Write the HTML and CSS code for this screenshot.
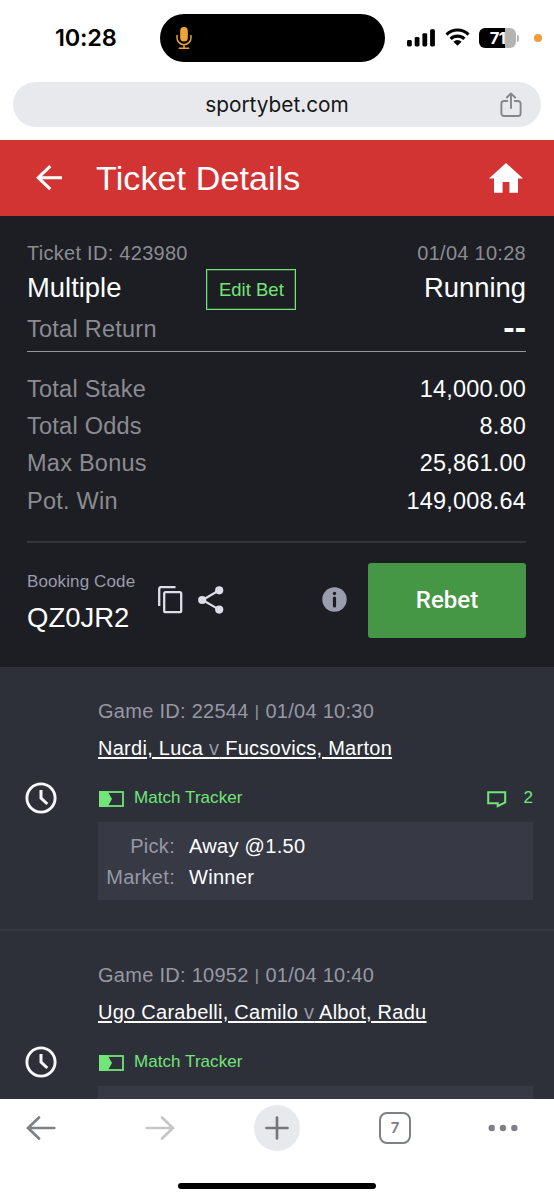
FILE: index.html
```html
<!DOCTYPE html>
<html lang="en">
<head>
<meta charset="utf-8">
<title>Ticket Details</title>
<link rel="stylesheet" href="styles.css">
</head>
<body>
<div class="phone">
  <div class="status">
    <div class="time">10:28</div>
    <div class="island">
      <svg width="16" height="23" viewBox="0 0 16 23"><rect x="4.2" y="0" width="7.6" height="14.6" rx="3.8" fill="#f0a335"/><path d="M1 8.5v2.2a7 7 0 0 0 14 0V8.500M8 17.700v3.500M3.300 21.300h9.400" fill="none" stroke="#e8a040" stroke-width="1.500" stroke-linecap="round"/></svg>
    </div>
    <svg class="signal" width="28" height="18" viewBox="0 0 28 18"><rect x="0" y="11" width="4.800" height="6.500" rx="1.400"/><rect x="7.700" y="8" width="4.800" height="9.500" rx="1.400"/><rect x="15.400" y="4.200" width="4.800" height="13.300" rx="1.400"/><rect x="23.100" y="0.300" width="4.800" height="17.200" rx="1.400"/></svg>
    <svg class="wifi" width="25" height="18" viewBox="0 0 25 18"><path d="M1.500 6.600a15.600 15.600 0 0 1 22 0M5.600 10.900a9.900 9.900 0 0 1 13.800 0" fill="none" stroke="#000" stroke-width="3.100"/><path d="M12.500 17.700 8.400 13.700a6 6 0 0 1 8.200 0z"/></svg>
    <div class="battery"><span>71</span></div>
    <i class="cap"></i>
    <i class="dot"></i>
  </div>
  <div class="address">
    <span>sportybet.com</span>
    <svg width="22" height="26" viewBox="0 0 22 26" fill="none" stroke="#85868b" stroke-width="1.900" stroke-linecap="round" stroke-linejoin="round"><path d="M7.300 9H4A2.600 2.600 0 0 0 1.400 11.600v9.800A2.600 2.600 0 0 0 4 24h14a2.600 2.600 0 0 0 2.600-2.600v-9.800A2.600 2.600 0 0 0 18 9h-3.300M11 16V1.800M6.900 5.500 11 1.400l4.100 4.100"/></svg>
  </div>
  <header class="header">
    <svg width="26" height="26" viewBox="0 0 26 26" fill="none" stroke="#fff" stroke-width="3.100"><path d="M14.300 1.200 2.200 12.700l12.100 11.500M2.500 12.700H26"/></svg>
    <h1>Ticket Details</h1>
    <svg class="home" width="34" height="30" viewBox="0 0 34 30" fill="#fff"><path d="M17 0 34 15.500h-5V29.700h-8.600V19h-6.800v10.700H5V15.500H0z"/></svg>
  </header>
  <main class="page">
    <section class="ticket">
      <div class="row id"><span>Ticket ID: 423980</span><span>01/04 10:28</span></div>
      <div class="row kind"><span>Multiple</span><button class="edit">Edit Bet</button><span class="running">Running</span></div>
      <div class="row return"><span>Total Return</span><b>--</b></div>
      <div class="stats">
        <div class="row"><span>Total Stake</span><em>14,000.00</em></div>
        <div class="row"><span>Total Odds</span><em>8.80</em></div>
        <div class="row"><span>Max Bonus</span><em>25,861.00</em></div>
        <div class="row"><span>Pot. Win</span><em>149,008.64</em></div>
      </div>
      <div class="booking">
        <div class="code"><small>Booking Code</small><strong>QZ0JR2</strong></div>
        <svg class="copy" width="25" height="28" viewBox="0 0 25 28" fill="none" stroke="#dcdee7" stroke-width="2.300"><path d="M1.200 20V3a2 2 0 0 1 2-2H17.500"/><rect x="6.200" y="6.200" width="17" height="20" rx="1.500"/></svg>
        <svg class="share" width="26" height="28" viewBox="0 0 26 28"><path d="M21.200 4.300 4.500 14l16.700 9.600" fill="none" stroke="#dcdee7" stroke-width="2.200"/><g fill="#dcdee7"><circle cx="21.200" cy="4.300" r="4.100"/><circle cx="4.200" cy="14" r="4.100"/><circle cx="21.200" cy="23.600" r="4.100"/></g></svg>
        <svg class="info" width="25" height="25" viewBox="0 0 25 25"><circle cx="12.500" cy="12.500" r="12.200" fill="#9a9dab"/><circle cx="12.500" cy="6.400" r="1.700" fill="#1c1d23"/><path d="M12.500 11v8" stroke="#1c1d23" stroke-width="3.200" stroke-linecap="round"/></svg>
        <button class="rebet">Rebet</button>
      </div>
    </section>
    <section class="game">
      <svg class="clock" width="32" height="32" viewBox="0 0 32 32" fill="none" stroke="#f7f8fc"><circle cx="16" cy="16" r="14.100" stroke-width="2.900"/><path d="M16 8v8.200l6.300 5.800" stroke-width="3"/></svg>
      <div class="info-col">
        <div class="meta">Game ID: 22544 <i>|</i> 01/04 10:30</div>
        <a class="teams">Nardi, Luca <i>v</i> Fucsovics, Marton</a>
        <div class="tracker">
          <svg width="25" height="16" viewBox="0 0 25 16"><rect x="1" y="1" width="23" height="14" fill="none" stroke="#72e578" stroke-width="1.800"/><path d="M0 0h8.500l4.500 8-4.500 8H0z" fill="#72e578"/></svg>
          <span>Match Tracker</span>
          <svg class="chat" width="20" height="17" viewBox="0 0 20 17" fill="none" stroke="#72e578" stroke-width="2"><path d="M1.200 1.200h17v10.300l-7.500 3.700v-2.900H1.200z"/></svg>
          <span>2</span>
        </div>
        <div class="pick"><label>Pick:</label><span>Away @1.50</span><label>Market:</label><span>Winner</span></div>
      </div>
    </section>
    <section class="game">
      <svg class="clock" width="32" height="32" viewBox="0 0 32 32" fill="none" stroke="#f7f8fc"><circle cx="16" cy="16" r="14.100" stroke-width="2.900"/><path d="M16 8v8.200l6.300 5.800" stroke-width="3"/></svg>
      <div class="info-col">
        <div class="meta">Game ID: 10952 <i>|</i> 01/04 10:40</div>
        <a class="teams">Ugo Carabelli, Camilo <i>v</i> Albot, Radu</a>
        <div class="tracker">
          <svg width="25" height="16" viewBox="0 0 25 16"><rect x="1" y="1" width="23" height="14" fill="none" stroke="#72e578" stroke-width="1.800"/><path d="M0 0h8.500l4.500 8-4.500 8H0z" fill="#72e578"/></svg>
          <span>Match Tracker</span>
        </div>
        <div class="pick"></div>
      </div>
    </section>
  </main>
  <footer class="toolbar">
    <nav>
      <svg width="30" height="24" viewBox="0 0 30 24" fill="none" stroke="#7d8186" stroke-width="2.700" stroke-linecap="round"><path d="M13 1.500 2 12l11 10.500M2 12h26.300"/></svg>
      <svg class="forward" width="30" height="24" viewBox="0 0 30 24" fill="none" stroke="#c6c6c8" stroke-width="2.700" stroke-linecap="round"><path d="M17 1.500 28 12 17 22.500M28 12H1.700"/></svg>
      <div class="plus"><svg width="24" height="24" viewBox="0 0 24 24" stroke="#74777c" stroke-width="2.700" stroke-linecap="round"><path d="M12 1.500v21M1.500 12h21"/></svg></div>
      <div class="tabs">7</div>
      <svg class="more" width="30" height="8" viewBox="0 0 30 8" fill="#7d8186"><circle cx="3.700" cy="4" r="3.200"/><circle cx="15" cy="4" r="3.200"/><circle cx="26.300" cy="4" r="3.200"/></svg>
    </nav>
    <div class="indicator"></div>
  </footer>
</div>
</body>
</html>
```
FILE: styles.css
```css
* { box-sizing: border-box; margin: 0; padding: 0; }
body { background: #fff; font-family: "Liberation Sans", Arial, sans-serif; }
svg { display: block; flex: none; }
button { font: inherit; }
i, em { font-style: normal; }
.phone { width: 554px; height: 1200px; display: flex; flex-direction: column; overflow: hidden; }

.status { height: 82px; flex: none; display: flex; align-items: center; padding: 0 12px 6px 55px; }
.time { width: 105px; font: 600 23.500px/30px Inter, sans-serif; letter-spacing: -0.200px; }
.island { width: 225px; height: 48px; border-radius: 24px; background: #000; display: flex; align-items: center; padding-left: 16px; }
.signal { margin-left: 22px; margin-top: -1px; }
.wifi { margin-left: 10px; margin-top: -2px; }
.battery { margin-left: 9px; margin-top: -1px; width: 37px; height: 20px; border-radius: 6px; background: linear-gradient(90deg, #000 71%, #b4b4b4 71%); color: #fff; font: 700 16.500px/20px Inter, sans-serif; text-align: center; letter-spacing: -0.5px; }
.cap { width: 2px; height: 7px; margin-left: 1px; border-radius: 0 3px 3px 0; background: #b4b4b4; }
.dot { width: 8px; height: 8px; margin-left: 15px; border-radius: 50%; background: #f19a37; }

.address { flex: none; height: 45px; margin: 0 13px 13px; border-radius: 23px; background: #e8e9ed; display: flex; align-items: center; justify-content: center; position: relative; font: 400 20.800px/45px Inter, sans-serif; color: #16171a; }
.address svg { position: absolute; right: 19px; top: 10px; }

.header { flex: none; height: 76px; background: #d13433; display: flex; align-items: center; padding: 0 31px 0 36px; color: #fff; }
.header h1 { margin-left: 34px; font-size: 34px; font-weight: 400; line-height: 76px; letter-spacing: 0.120px; }
.home { margin-left: auto; }

.page { flex: 1; min-height: 0; overflow: hidden; background: #2d3038; }
.ticket { height: 451px; padding: 25px 28px 0 27px; background: #1d1e24; }
.row { display: flex; justify-content: space-between; color: #8b8c91; }
.id { font-size: 20px; line-height: 25px; letter-spacing: 0.280px; }
.kind { height: 44px; line-height: 44px; font-size: 27.400px; color: #fff; }
.edit { align-self: flex-end; width: 90px; height: 41px; margin-left: 85px; border: 1px solid #72e578; outline: 1px solid #72e57840; outline-offset: -2px; background: none; color: #72e578; font-size: 18.500px; line-height: 40px; }
.running { margin-left: auto; }
.return { height: 42px; line-height: 39px; font-size: 23.500px; letter-spacing: 0.250px; border-bottom: 1px solid #96979b; }
.return b { color: #fff; font-size: 34px; line-height: 35px; letter-spacing: 0; }
.stats { height: 191px; padding-top: 18.600px; border-bottom: 2px solid #33353a; font-size: 23.500px; letter-spacing: 0.250px; line-height: 37.400px; }
.stats em { color: #fff; letter-spacing: 0.200px; }
.booking { display: flex; align-items: center; height: 75px; margin-top: 20px; }
.code { width: 131px; padding-top: 3px; color: #fff; }
.code small { display: block; font-size: 17px; line-height: 22px; letter-spacing: 0.120px; color: #9a9bab; }
.code strong { display: block; margin-top: 10px; font-size: 27.500px; line-height: 30px; font-weight: 400; }
.copy, .info { margin-top: -2px; }
.share { margin-left: 15px; margin-top: -2px; }
.booking .info { margin-left: 98px; }
.rebet { margin-left: auto; width: 158px; height: 75px; border: 0; border-radius: 3px; background: #459645; color: #fff; font: 500 24px/75px Roboto, sans-serif; }

.game { height: 264px; display: flex; padding: 0 21px 0 25px; border-bottom: 2px solid #363942; }
.clock { margin-top: 115px; }
.info-col { flex: 1; margin-left: 41px; padding-top: 29px; }
.meta { font-size: 20px; line-height: 30px; letter-spacing: 0.280px; color: #9698a4; }
.meta i { margin: 0 0.300px; font-size: 16px; line-height: 15px; vertical-align: 1.500px; }
.teams { display: inline-block; margin-top: 7px; font-size: 20px; line-height: 30px; letter-spacing: 0.270px; color: #fff; text-decoration: underline; text-decoration-thickness: 1.500px; text-underline-offset: 2px; }
.teams i { color: #9698a4; }
.tracker { display: flex; align-items: center; height: 30px; margin-top: 20px; padding-left: 1px; font-size: 17px; letter-spacing: 0.060px; color: #72e578; }
.tracker svg { margin-top: 2px; }
.tracker span { margin-left: 10px; }
.tracker .chat { margin-left: auto; margin-right: 6px; }
.pick { display: grid; grid-template-columns: 77px 1fr; grid-auto-rows: 31px; column-gap: 14px; height: 78px; margin-top: 9px; padding-top: 9px; background: #373a45; color: #fff; font-size: 20px; line-height: 31px; letter-spacing: 0.300px; }
.pick label { text-align: right; color: #9698a4; }

.toolbar { flex: none; height: 101px; background: #fff; }
.toolbar nav { display: flex; align-items: center; height: 57px; padding: 0 36px 0 26px; }
.forward { margin-left: 89px; }
.plus { width: 46px; height: 46px; margin-left: 79px; border-radius: 50%; background: #e8e9ed; display: grid; place-items: center; }
.tabs { width: 32px; height: 32px; margin-left: 79px; border: 2.500px solid #7d8186; border-radius: 8px; color: #7d8186; font: 600 15px/27px Inter, sans-serif; text-align: center; }
.more { margin-left: auto; }
.indicator { width: 198px; height: 6px; margin: 27px auto 0; border-radius: 3px; background: #000; }
```
